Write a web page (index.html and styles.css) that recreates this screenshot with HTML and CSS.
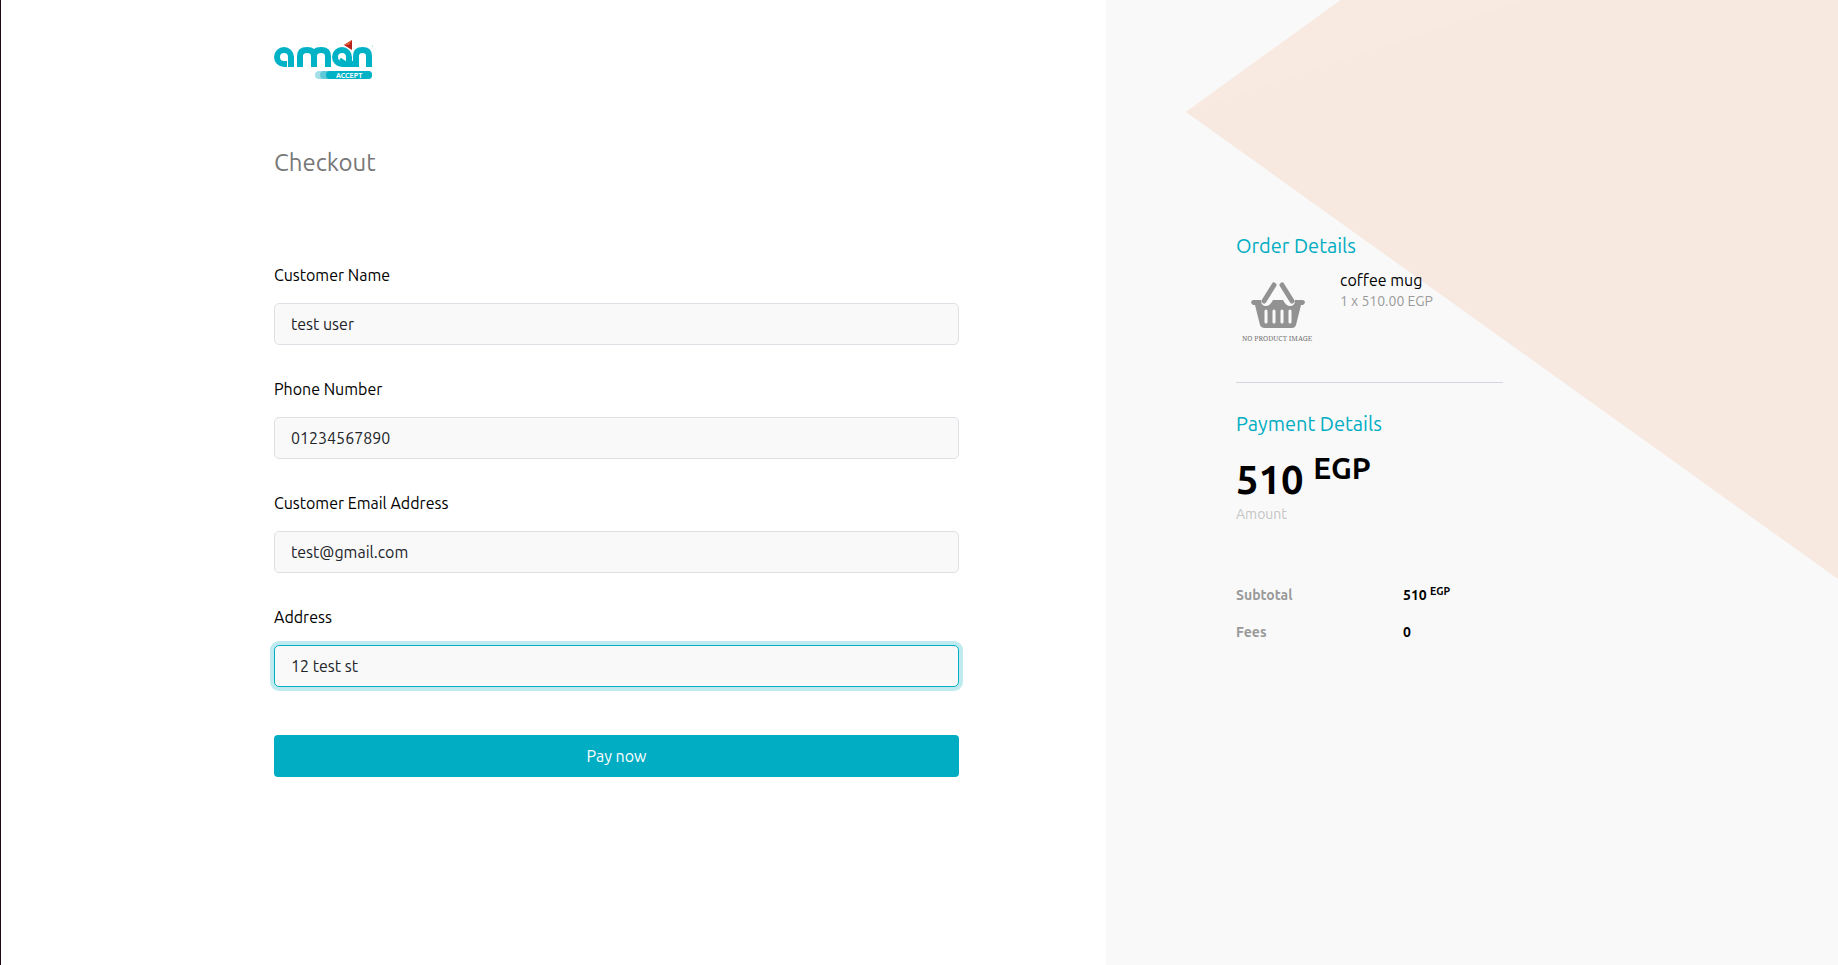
FILE: index.html
```html
<!DOCTYPE html>
<html lang="en">
<head>
<meta charset="utf-8">
<title>Checkout</title>
<link rel="stylesheet" href="styles.css">
</head>
<body>
<div class="page">
  <main class="checkout">
    <svg class="logo" viewBox="0 0 100 40" role="img" aria-label="aman accept">
      <g fill="none" stroke="#00b2c6" stroke-width="6">
        <path d="M17 27V17a7 7 0 1 0-7 7h3"/>
        <path d="M26 27V16q0-6 7-6t7 6v11M40 16q0-6 7-6t7 6v11"/>
        <path d="M75 21V17a7 7 0 1 0-7 7h13"/>
        <path d="M82 27V16q0-6 6.500-6t6.500 6v11"/>
        <path stroke-width="3" d="M66 19l6 4"/>
      </g>
      <path fill="#b5201d" d="M70 5l8-5v10z"/>
      <path fill="#e4572e" d="M70 5l8-5-3 5z"/>
      <circle cx="98.500" cy="6" r="0.600" fill="#5fcad8"/>
      <rect x="41" y="31" width="57" height="8" rx="4" fill="#a5e0e8"/>
      <rect x="46" y="31" width="52" height="8" rx="4" fill="#5fcad8"/>
      <rect x="52" y="31" width="46" height="8" rx="4" fill="#00b2c6"/>
      <text class="logo-tag" x="62" y="38">ACCEPT</text>
    </svg>
    <h1 class="title">Checkout</h1>
    <form class="form">
      <div class="field">
        <label for="name">Customer Name</label>
        <input id="name" type="text" value="test user">
      </div>
      <div class="field">
        <label for="phone">Phone Number</label>
        <input id="phone" type="tel" value="01234567890">
      </div>
      <div class="field">
        <label for="email">Customer Email Address</label>
        <input id="email" type="email" value="test@gmail.com">
      </div>
      <div class="field">
        <label for="address">Address</label>
        <input id="address" class="active" type="text" value="12 test st">
      </div>
      <button class="pay" type="submit">Pay now</button>
    </form>
  </main>
  <aside class="summary">
    <svg class="backdrop" viewBox="0 0 732 580" aria-hidden="true">
      <path fill="#f7e8e0" d="M80 112L235 0H732V579z"/>
      <path fill="#f8e9e1" d="M80 112L235 0H420L294 41L130 95z"/>
    </svg>
    <section class="order">
      <h2 class="heading">Order Details</h2>
      <div class="item">
        <svg class="thumb" viewBox="0 0 84 84" role="img" aria-label="No product image">
          <path fill="#929292" d="M17 32h8q0 6 5 6q4 0 7-6h10q3 6 7 6q5 0 5-6h8q4 2 0 5h-2l-5 20q-1 3-4 3H29q-4 0-5-3l-5-20h-2q-4-3 0-5z"/>
          <path fill="none" stroke="#929292" stroke-width="5" stroke-linecap="round" d="M38 17L28 33M46 17l10 16"/>
          <path fill="none" stroke="#f9f9f9" stroke-width="3" stroke-linecap="round" d="M30 43v11M38 43v11M46 43v11M54 43v11"/>
          <text class="thumb-text" x="6" y="73">NO PRODUCT IMAGE</text>
        </svg>
        <div>
          <p class="item-name">coffee mug</p>
          <p class="item-price">1 x 510.00 EGP</p>
        </div>
      </div>
    </section>
    <section class="payment">
      <h2 class="heading">Payment Details</h2>
      <p class="total">510 <sup>EGP</sup></p>
      <p class="caption">Amount</p>
      <dl class="costs">
        <dt>Subtotal</dt><dd>510 <sup>EGP</sup></dd>
        <dt>Fees</dt><dd>0</dd>
      </dl>
    </section>
  </aside>
</div>
</body>
</html>
```
FILE: styles.css
```css
* { box-sizing: border-box; }
body {
  margin: 0;
  font: 16px/24px Ubuntu, "Noto Sans", sans-serif;
  color: #000;
  background: #fff;
}
h1, h2, p, dl, dd { margin: 0; font-weight: 400; }
.page {
  display: grid;
  grid-template-columns: 1105fr 732fr;
  min-height: 100vh;
  border-left: 1px solid #1d0815;
}
.checkout { padding: 40px 147px 40px 273px; }
.logo { display: block; width: 100px; height: 40px; }
.logo-tag { font: bold 7px Ubuntu, "Open Sans", sans-serif; fill: #fff; }
.title { margin-top: 65px; font-size: 24px; line-height: 36px; color: #777; }
.form { display: grid; gap: 32px; margin-top: 82px; }
.field { display: grid; gap: 16px; }
.field input {
  width: 100%;
  height: 42px;
  padding: 0 16px;
  border: 1px solid #dfdfe6;
  border-radius: 5px;
  background: #f9f9f9;
  color: #212529;
  font: inherit;
  outline: 0;
}
.field .active { border-color: #00adc2; box-shadow: 0 0 0 4px #bfebf0; }
.pay {
  height: 42px;
  margin-top: 16px;
  border: 0;
  border-radius: 4px;
  background: #00adc2;
  color: #fff;
  font: inherit;
}
.summary {
  position: relative;
  padding: 231px 130px 40px;
  background: #f9f9f9;
  overflow: hidden;
}
.backdrop { position: absolute; top: 0; right: 0; width: 100%; }
.order, .payment { position: relative; max-width: 267px; }
.order { padding-bottom: 30px; border-bottom: 1px solid #d5d5df; }
.heading { font-size: 20px; line-height: 30px; color: #00adc2; }
.item { display: flex; gap: 20px; margin-top: 7px; }
.thumb { flex: none; width: 84px; height: 84px; }
.thumb-text { font: 7px "Noto Serif", "Liberation Serif", serif; fill: #777; }
.item-price { font-size: 14px; line-height: 18px; color: #999; }
.payment { padding-top: 26px; }
.total { margin-top: 19px; font-size: 40px; line-height: 44px; font-weight: 700; }
.caption { font-size: 14px; color: #c4c4c4; }
sup { font-size: 75%; line-height: 0; vertical-align: 0.5em; }
.costs {
  display: grid;
  grid-template-columns: 167px 1fr;
  row-gap: 13px;
  margin-top: 57px;
  font-size: 14px;
  font-weight: 700;
}
.costs dt { color: #999; }
.costs dd { font-weight: 700; }
```
